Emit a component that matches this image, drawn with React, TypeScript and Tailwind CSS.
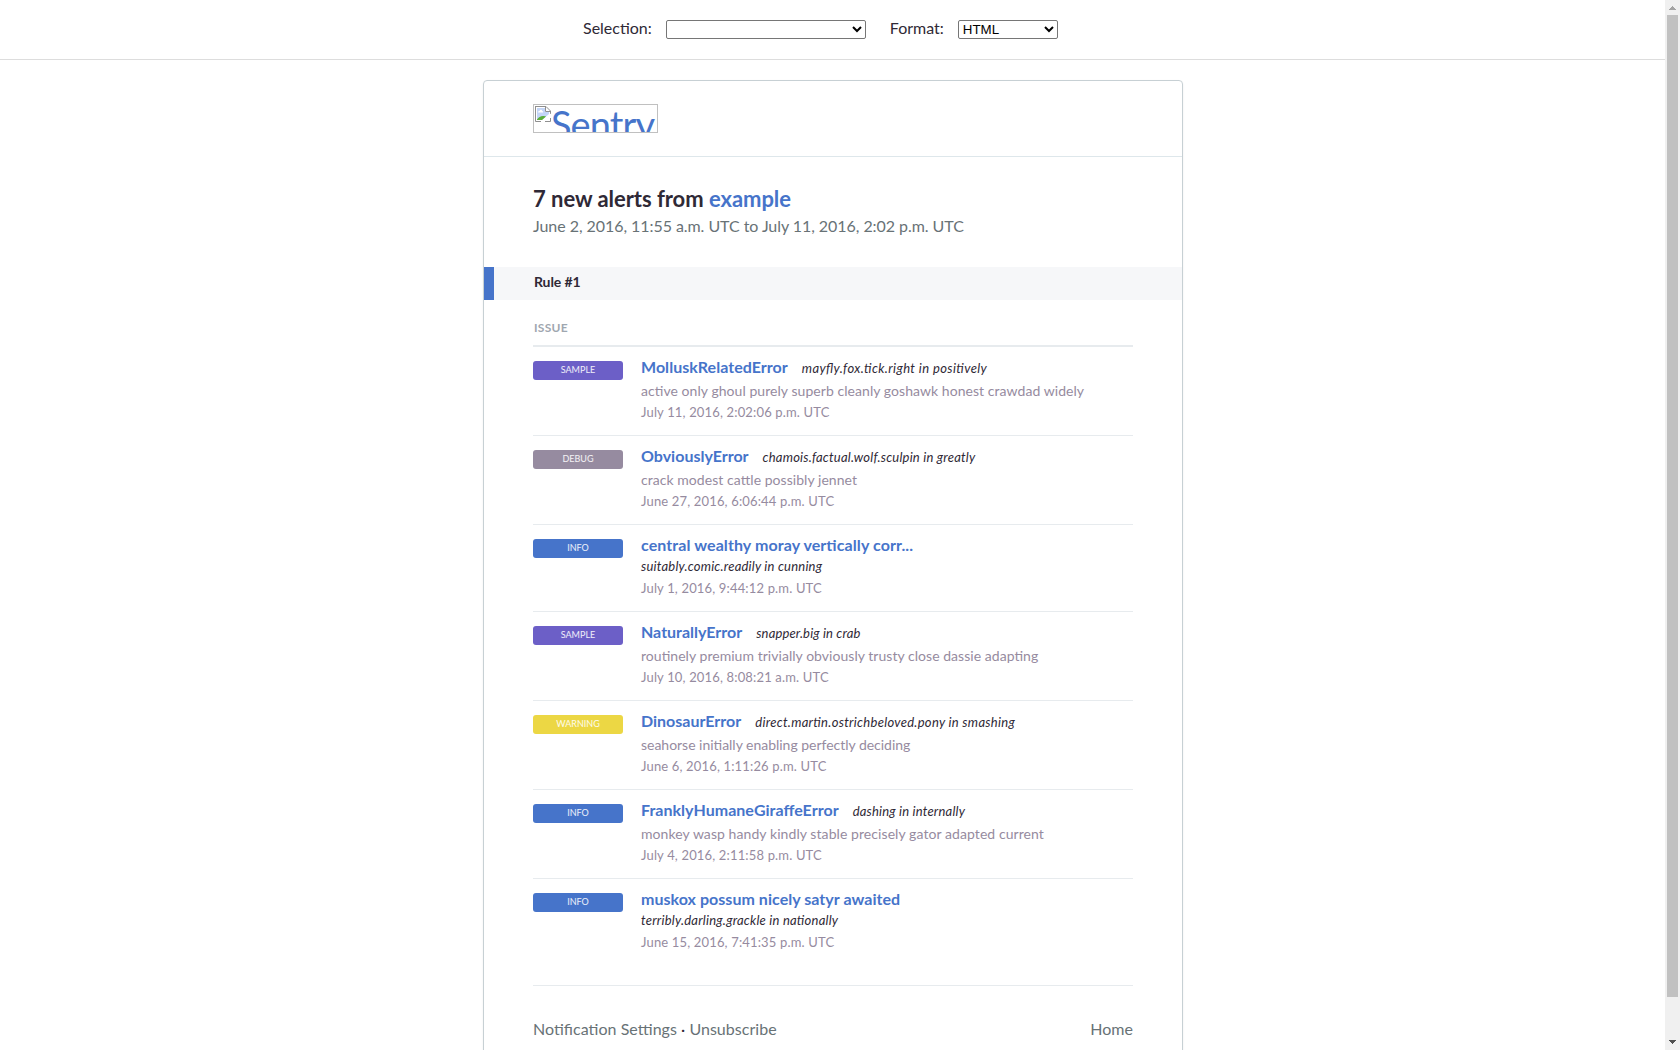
type Issue = {
  level: "SAMPLE" | "DEBUG" | "INFO" | "WARNING";
  title: string;
  culprit: string;
  tracking: string;
  titleTracking?: string;
  message?: string;
  messageTracking?: string;
  date: string;
};

const issues: Issue[] = [
  { level: "SAMPLE", title: "MolluskRelatedError", culprit: "mayfly.fox.tick.right in positively", tracking: "tracking-[0.4px]", titleTracking: "tracking-[0.03px]", message: "active only ghoul purely superb cleanly goshawk honest crawdad widely", messageTracking: "tracking-[0.055px]", date: "July 11, 2016, 2:02:06 p.m. UTC" },
  { level: "DEBUG", title: "ObviouslyError", culprit: "chamois.factual.wolf.sculpin in greatly", tracking: "tracking-[0.22px]", message: "crack modest cattle possibly jennet", messageTracking: "tracking-[0.05px]", date: "June 27, 2016, 6:06:44 p.m. UTC" },
  { level: "INFO", title: "central wealthy moray vertically corr...", culprit: "suitably.comic.readily in cunning", tracking: "tracking-[0.22px]", titleTracking: "tracking-[0.09px]", date: "July 1, 2016, 9:44:12 p.m. UTC" },
  { level: "SAMPLE", title: "NaturallyError", culprit: "snapper.big in crab", tracking: "tracking-[0.16px]", message: "routinely premium trivially obviously trusty close dassie adapting", messageTracking: "tracking-[0.04px]", date: "July 10, 2016, 8:08:21 a.m. UTC" },
  { level: "WARNING", title: "DinosaurError", culprit: "direct.martin.ostrichbeloved.pony in smashing", tracking: "tracking-[0.3px]", message: "seahorse initially enabling perfectly deciding", messageTracking: "tracking-[-0.02px]", date: "June 6, 2016, 1:11:26 p.m. UTC" },
  { level: "INFO", title: "FranklyHumaneGiraffeError", culprit: "dashing in internally", tracking: "tracking-[0.2px]", titleTracking: "tracking-[0.03px]", message: "monkey wasp handy kindly stable precisely gator adapted current", messageTracking: "tracking-[0.075px]", date: "July 4, 2016, 2:11:58 p.m. UTC" },
  { level: "INFO", title: "muskox possum nicely satyr awaited", culprit: "terribly.darling.grackle in nationally", tracking: "tracking-[0.23px]", titleTracking: "tracking-[0.04px]", date: "June 15, 2016, 7:41:35 p.m. UTC" },
];

const levelColor = {
  SAMPLE: "bg-[#6c5fc7]",
  DEBUG: "bg-[#968ba0]",
  INFO: "bg-[#4674ca]",
  WARNING: "bg-[#ecd744]",
};

function Toolbar() {
  return (
    <div className="flex h-[60px] items-start border-b border-[#dddddd] pl-[583px] pt-[18px] text-base leading-5">
      <label>Selection:</label>
      <select className="ml-[14px] mt-[2px] h-[19px] w-[200px] appearance-auto rounded-[2px] border border-[#767676] bg-white font-['Liberation_Sans'] text-[13.333px] leading-normal text-black" />
      <label className="ml-6">Format:</label>
      <select className="ml-[14px] mt-[2px] h-[19px] w-[100px] appearance-auto rounded-[2px] border border-[#767676] bg-white font-['Liberation_Sans'] text-[13.333px] leading-normal text-black">
        <option>HTML</option>
      </select>
    </div>
  );
}

function BrokenImage() {
  return (
    <svg width="16" height="16" viewBox="0 0 16 16" className="shrink-0">
      <path d="M1.5 0.5H11L15.5 5V15.5H0.5V0.5Z" fill="#fff" />
      <path d="M2 2H10V6H14V8L7 14H2Z" fill="#c3d5f7" />
      <path d="M3 6.5C3 5 4 5 4.5 5C5 3.2 7 3.5 7.2 5C8.2 5 8.5 6 8 6.5Z" fill="#fff" />
      <path d="M2 14V13.5C3.5 11.5 5.5 10 8 10C9.5 10 10.5 10.3 11 10.5L7 14Z" fill="#5aae3a" />
      <path d="M0.5 0V15.5H6M0 0.5H11L15.5 5V8M10.5 0.5V5.5H15.5M10 15.5H15.5V12" fill="none" stroke="#8f8f8f" />
      <path d="M16 7.5L6 15.5L8.5 16L16 10.5Z" fill="#fff" />
    </svg>
  );
}

function IssueRow({ issue, last }: { issue: Issue; last: boolean }) {
  return (
    <div className={last ? "flex h-[107px] border-b border-[#e7ebee] pt-[14px]" : issue.message ? "flex h-[89px] border-b border-[#e7ebee] pt-[14px]" : "flex h-[87px] border-b border-[#e7ebee] pt-[14px]"}>
      <span className={`${levelColor[issue.level]} h-[19px] w-[90px] shrink-0 rounded-[3px] text-center text-[9px] leading-[18px] text-white/90`}>{issue.level}</span>
      <div className="ml-[18px] -mt-1">
        <div className={issue.message ? "flex h-[22px] items-baseline leading-5" : "leading-5"}>
          <h3 className={`text-base font-bold leading-5 text-[#4674ca] ${issue.titleTracking ?? ""}`}>{issue.title}</h3>
          <em className={`${issue.tracking} ${issue.message ? "ml-[14px] text-[13px] leading-5" : "block h-[22px] text-[13px] leading-[22px]"}`}>{issue.culprit}</em>
        </div>
        {issue.message && <p className={`h-[23px] text-sm leading-[23px] text-[#968ba0] ${issue.messageTracking ?? ""}`}>{issue.message}</p>}
        <p className={issue.message ? "text-[13px] leading-5 tracking-[0.16px] text-[#968ba0]" : "pt-px text-[13px] leading-5 tracking-[0.16px] text-[#968ba0]"}>{issue.date}</p>
      </div>
    </div>
  );
}

function Scrollbar() {
  return (
    <div className="flex w-[15px] shrink-0 flex-col items-center bg-[#f0f0f0]">
      <svg width="15" height="15" shapeRendering="crispEdges"><path d="M4 10V9H5V8H6V7H7V6H8V7H9V8H10V9H11V10Z" fill="#a3a3a3" /></svg>
      <div className="h-[982px] w-[11px] bg-[#c1c1c1]" />
      <svg className="mt-auto" width="15" height="15" shapeRendering="crispEdges"><path d="M4 5V6H5V7H6V8H7V9H8V8H9V7H10V6H11V5Z" fill="#505050" /></svg>
    </div>
  );
}

export default function App() {
  return (
    <div className="flex h-[1050px] overflow-hidden bg-white font-['Lato',sans-serif] text-[#2f2936] [font-feature-settings:'liga'_1,'clig'_1]">
      <div className="w-[1665px] shrink-0">
        <Toolbar />
        <main className="ml-[483px] mt-5 h-[1100px] w-[700px] rounded-t border border-[#c7d0d4] shadow-[0_1px_2px_rgba(0,0,0,0.08)]">
          <header className="h-[76px] border-b border-[#dee7eb] pl-[49px] pt-[23px]">
            <a className="flex h-[29px] w-[125px] overflow-hidden border border-[#c0c0c0] pl-px pt-px text-[38px] leading-[37px] tracking-[-0.9px] text-[#4674ca]">
              <BrokenImage />
              <span>Sentry</span>
            </a>
          </header>
          <div className="h-[110px] px-[49px] pt-[28px]">
            <h2 className="text-[22px] font-bold leading-[28px] tracking-[-0.04px]">7 new alerts from <a className="text-[#4674ca]">example</a></h2>
            <p className="mt-px text-base leading-6 tracking-[-0.055px] text-[#687276]">June 2, 2016, 11:55 a.m. UTC to July 11, 2016, 2:02 p.m. UTC</p>
          </div>
          <div className="h-[33px] border-l-[10px] border-[#4674ca] bg-[#f6f7f9] pl-[40px] text-sm font-bold leading-[30px]"><span className="tracking-[-0.1px]">Rule #1</span></div>
          <div className="px-[49px]">
            <div className="h-[47px] border-b-2 border-[#e7ebee] pl-px pt-[19px] text-xs font-bold leading-[18px] tracking-[0.3px] text-[#9fa7b0]">ISSUE</div>
            {issues.map((issue, i) => <IssueRow key={issue.title} issue={issue} last={i === issues.length - 1} />)}
            <footer className="flex justify-between pt-[31px] text-base leading-6 tracking-[0.03px] text-[#687276]">
              <div>Notification Settings <span className="text-[#2f2936]">·</span> Unsubscribe</div>
              <a>Home</a>
            </footer>
          </div>
        </main>
      </div>
      <Scrollbar />
    </div>
  );
}
